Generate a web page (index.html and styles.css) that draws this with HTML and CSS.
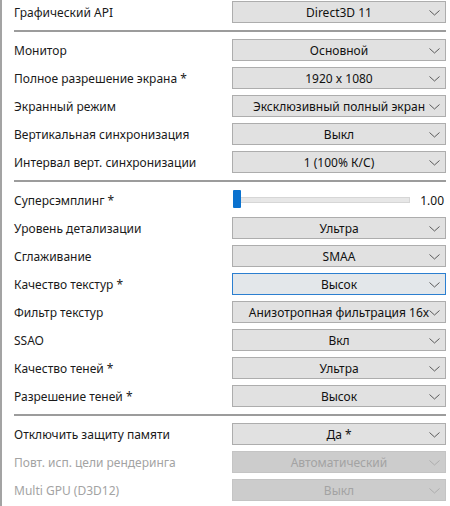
FILE: index.html
```html
<!DOCTYPE html>
<html>
<head>
<meta charset="utf-8">
<link rel="stylesheet" href="styles.css">
</head>
<body>
<div class="panel">
  <div class="group first">
    <div class="row"><span class="label">Графический API</span><div class="combo">Direct3D 11<span class="chev"><svg width="11" height="6" viewBox="0 0 11 6"><path d="M0.5 0.5 L5.5 5 L10.5 0.5" fill="none" stroke="currentColor" stroke-width="1"/></svg></span></div></div>
  </div>
  <div class="sep"></div>
  <div class="group">
    <div class="row"><span class="label">Монитор</span><div class="combo">Основной<span class="chev"><svg width="11" height="6" viewBox="0 0 11 6"><path d="M0.5 0.5 L5.5 5 L10.5 0.5" fill="none" stroke="currentColor" stroke-width="1"/></svg></span></div></div>
    <div class="row"><span class="label">Полное разрешение экрана *</span><div class="combo">1920 x 1080<span class="chev"><svg width="11" height="6" viewBox="0 0 11 6"><path d="M0.5 0.5 L5.5 5 L10.5 0.5" fill="none" stroke="currentColor" stroke-width="1"/></svg></span></div></div>
    <div class="row"><span class="label">Экранный режим</span><div class="combo">Эксклюзивный полный экран<span class="chev"><svg width="11" height="6" viewBox="0 0 11 6"><path d="M0.5 0.5 L5.5 5 L10.5 0.5" fill="none" stroke="currentColor" stroke-width="1"/></svg></span></div></div>
    <div class="row"><span class="label">Вертикальная синхронизация</span><div class="combo">Выкл<span class="chev"><svg width="11" height="6" viewBox="0 0 11 6"><path d="M0.5 0.5 L5.5 5 L10.5 0.5" fill="none" stroke="currentColor" stroke-width="1"/></svg></span></div></div>
    <div class="row"><span class="label">Интервал верт. синхронизации</span><div class="combo">1 (100% К/С)<span class="chev"><svg width="11" height="6" viewBox="0 0 11 6"><path d="M0.5 0.5 L5.5 5 L10.5 0.5" fill="none" stroke="currentColor" stroke-width="1"/></svg></span></div></div>
  </div>
  <div class="sep"></div>
  <div class="group">
    <div class="row"><span class="label">Суперсэмплинг *</span><div class="slider"><div class="track"><div class="thumb"></div></div><span class="val">1.00</span></div></div>
    <div class="row"><span class="label">Уровень детализации</span><div class="combo">Ультра<span class="chev"><svg width="11" height="6" viewBox="0 0 11 6"><path d="M0.5 0.5 L5.5 5 L10.5 0.5" fill="none" stroke="currentColor" stroke-width="1"/></svg></span></div></div>
    <div class="row"><span class="label">Сглаживание</span><div class="combo">SMAA<span class="chev"><svg width="11" height="6" viewBox="0 0 11 6"><path d="M0.5 0.5 L5.5 5 L10.5 0.5" fill="none" stroke="currentColor" stroke-width="1"/></svg></span></div></div>
    <div class="row"><span class="label">Качество текстур *</span><div class="combo focus">Высок<span class="chev"><svg width="11" height="6" viewBox="0 0 11 6"><path d="M0.5 0.5 L5.5 5 L10.5 0.5" fill="none" stroke="currentColor" stroke-width="1"/></svg></span></div></div>
    <div class="row"><span class="label">Фильтр текстур</span><div class="combo">Анизотропная фильтрация 16x<span class="chev"><svg width="11" height="6" viewBox="0 0 11 6"><path d="M0.5 0.5 L5.5 5 L10.5 0.5" fill="none" stroke="currentColor" stroke-width="1"/></svg></span></div></div>
    <div class="row"><span class="label">SSAO</span><div class="combo">Вкл<span class="chev"><svg width="11" height="6" viewBox="0 0 11 6"><path d="M0.5 0.5 L5.5 5 L10.5 0.5" fill="none" stroke="currentColor" stroke-width="1"/></svg></span></div></div>
    <div class="row"><span class="label">Качество теней *</span><div class="combo">Ультра<span class="chev"><svg width="11" height="6" viewBox="0 0 11 6"><path d="M0.5 0.5 L5.5 5 L10.5 0.5" fill="none" stroke="currentColor" stroke-width="1"/></svg></span></div></div>
    <div class="row"><span class="label">Разрешение теней *</span><div class="combo">Высок<span class="chev"><svg width="11" height="6" viewBox="0 0 11 6"><path d="M0.5 0.5 L5.5 5 L10.5 0.5" fill="none" stroke="currentColor" stroke-width="1"/></svg></span></div></div>
  </div>
  <div class="sep"></div>
  <div class="group">
    <div class="row"><span class="label">Отключить защиту памяти</span><div class="combo">Да *<span class="chev"><svg width="11" height="6" viewBox="0 0 11 6"><path d="M0.5 0.5 L5.5 5 L10.5 0.5" fill="none" stroke="currentColor" stroke-width="1"/></svg></span></div></div>
    <div class="row disabled"><span class="label">Повт. исп. цели рендеринга</span><div class="combo">Автоматический<span class="chev"><svg width="11" height="6" viewBox="0 0 11 6"><path d="M0.5 0.5 L5.5 5 L10.5 0.5" fill="none" stroke="currentColor" stroke-width="1"/></svg></span></div></div>
    <div class="row disabled"><span class="label">Multi GPU (D3D12)</span><div class="combo">Выкл<span class="chev"><svg width="11" height="6" viewBox="0 0 11 6"><path d="M0.5 0.5 L5.5 5 L10.5 0.5" fill="none" stroke="currentColor" stroke-width="1"/></svg></span></div></div>
  </div>
</div>
</body>
</html>
```

FILE: styles.css
```css
html, body {
  margin: 0;
  padding: 0;
  background: #ffffff;
}
body {
  font-family: "Noto Sans", "Open Sans", sans-serif;
  font-size: 12px;
  color: #1a1a1a;
}
.panel {
  width: 448px;
  height: 506px;
  border-left: 2px solid #a3a3a3;
  box-sizing: border-box;
  padding-top: 1px;
  overflow: hidden;
}
.group {
  display: flex;
  flex-direction: column;
  gap: 6px;
}
.row {
  display: grid;
  grid-template-columns: 230px 214px;
  height: 22px;
  align-items: center;
}
.label {
  padding-left: 12px;
  white-space: nowrap;
}
.combo {
  position: relative;
  height: 22px;
  box-sizing: border-box;
  border: 1px solid #adadad;
  background: #e1e1e1;
  display: flex;
  align-items: center;
  justify-content: center;
  white-space: nowrap;
  overflow: hidden;
  color: #111;
}
.combo.focus {
  border-color: #2b7fd0;
  background: #e3e7ea;
}
.chev {
  position: absolute;
  right: 5px;
  top: 8px;
  width: 11px;
  height: 6px;
  display: flex;
  color: #5a5a5a;
  background: inherit;
}
.sep {
  height: 2px;
  background: #9c9c9c;
  margin: 7px 2px 7px 12px;
}
.slider {
  display: flex;
  align-items: center;
  height: 22px;
}
.track {
  position: relative;
  width: 174px;
  height: 4px;
  background: #e7e7e7;
  border: 1px solid #d6d6d6;
  margin-left: 2px;
}
.thumb {
  position: absolute;
  left: -2px;
  top: -8px;
  width: 8px;
  height: 18px;
  background: #0a72cf;
  border-radius: 1px;
}
.val {
  margin-left: auto;
  margin-right: 2px;
  color: #111;
}
.disabled .label {
  color: #a3a3a3;
}
.disabled .combo {
  background: #cccccc;
  border-color: #c4c4c4;
  color: #a3a3a3;
}
.disabled .chev {
  color: #adadad;
}
```
